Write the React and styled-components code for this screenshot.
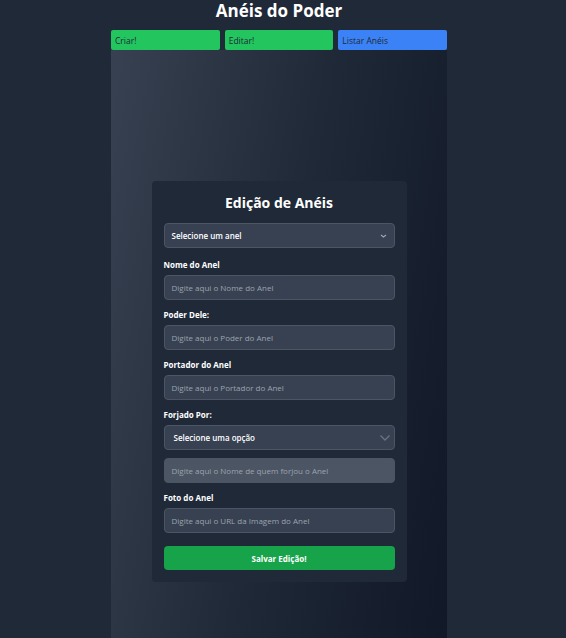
import styled, { createGlobalStyle } from "styled-components";

const GlobalStyle = createGlobalStyle`
  html, body {
    margin: 0;
    padding: 0;
    background: #1f2937;
    font-family: "Open Sans", "Noto Sans", sans-serif;
  }
`;

const Page = styled.div`
  min-height: 638px;
  padding-right: 8px;
  display: flex;
  flex-direction: column;
  align-items: center;
`;

const Title = styled.h1`
  margin: 0;
  height: 30px;
  line-height: 22px;
  font-size: 17px;
  font-weight: 700;
  color: #ffffff;
`;

const Column = styled.div`
  width: 336px;
  display: flex;
  flex-direction: column;
`;

const Nav = styled.nav`
  display: grid;
  grid-template-columns: 1fr 1fr 1fr;
  gap: 5px;
`;

const NavButton = styled.button`
  height: 20px;
  border: none;
  border-radius: 2px;
  padding: 0 4px;
  text-align: left;
  font-family: inherit;
  font-size: 8.5px;
  color: #1f2937;
  background: ${(p) => (p.$blue ? "#3b82f6" : "#22c55e")};
`;

const Stage = styled.main`
  height: 588px;
  background: linear-gradient(100deg, #374151 0%, #1f2937 50%, #111827 100%);
  display: flex;
  justify-content: center;
  padding-top: 131px;
  box-sizing: border-box;
`;

const Card = styled.form`
  width: 255px;
  height: 401px;
  box-sizing: border-box;
  background: #1f2937;
  border-radius: 4px;
  padding: 12px 12px;
  display: flex;
  flex-direction: column;
`;

const CardTitle = styled.h2`
  margin: 0 0 11px;
  text-align: center;
  font-size: 14px;
  line-height: 19px;
  font-weight: 700;
  color: #ffffff;
`;

const Field = styled.div`
  position: relative;
  flex-shrink: 0;
  height: 25px;
  box-sizing: border-box;
  border: 1px solid #4b5563;
  border-radius: 4px;
  background: ${(p) => (p.$disabled ? "#4b5563" : "#374151")};
  display: flex;
  align-items: center;
  padding: 0 0 0 ${(p) => p.$pl || 7}px;
  font-size: 8px;
  color: ${(p) => (p.$value ? "#ffffff" : "#9ca3af")};
  font-weight: ${(p) => (p.$value ? 600 : 400)};
  margin-bottom: ${(p) => p.$mb || 10}px;
`;

const Chevron = styled.svg`
  position: absolute;
  right: ${(p) => p.$right}px;
  top: 50%;
  transform: translateY(-50%);
`;

const Label = styled.label`
  font-size: 8px;
  font-weight: 700;
  color: #ffffff;
  line-height: 10px;
  margin-bottom: 5px;
`;

const Submit = styled.button`
  margin-top: 3px;
  flex-shrink: 0;
  height: 24px;
  border: none;
  border-radius: 4px;
  background: #16a34a;
  color: #ffffff;
  font-family: inherit;
  font-size: 8px;
  font-weight: 700;
`;

const fields = [
  { label: "Nome do Anel", placeholder: "Digite aqui o Nome do Anel" },
  { label: "Poder Dele:", placeholder: "Digite aqui o Poder do Anel" },
  { label: "Portador do Anel", placeholder: "Digite aqui o Portador do Anel" },
];

export default function App() {
  return (
    <Page>
      <GlobalStyle />
      <Title>Anéis do Poder</Title>
      <Column>
        <Nav>
          <NavButton>Criar!</NavButton>
          <NavButton>Editar!</NavButton>
          <NavButton $blue>Listar Anéis</NavButton>
        </Nav>
        <Stage>
          <Card>
            <CardTitle>Edição de Anéis</CardTitle>
            <Field $value $mb={12}>
              Selecione um anel
              <Chevron $right={7} width="7" height="5" viewBox="0 0 7 5">
                <path d="M1 1.5 L3.5 3.5 L6 1.5" fill="none" stroke="#9ca3af" strokeWidth="1.2" />
              </Chevron>
            </Field>
            {fields.map((f) => (
              <>
                <Label key={f.label}>{f.label}</Label>
                <Field key={f.placeholder}>{f.placeholder}</Field>
              </>
            ))}
            <Label>Forjado Por:</Label>
            <Field $value $mb={8} $pl={9}>
              Selecione uma opção
              <Chevron $right={3} width="12" height="8" viewBox="0 0 12 8">
                <path d="M1.5 1.5 L6 6 L10.5 1.5" fill="none" stroke="#6b7280" strokeWidth="1.3" />
              </Chevron>
            </Field>
            <Field $disabled>Digite aqui o Nome de quem forjou o Anel</Field>
            <Label>Foto do Anel</Label>
            <Field>Digite aqui o URL da Imagem do Anel</Field>
            <Submit type="button">Salvar Edição!</Submit>
          </Card>
        </Stage>
      </Column>
    </Page>
  );
}
